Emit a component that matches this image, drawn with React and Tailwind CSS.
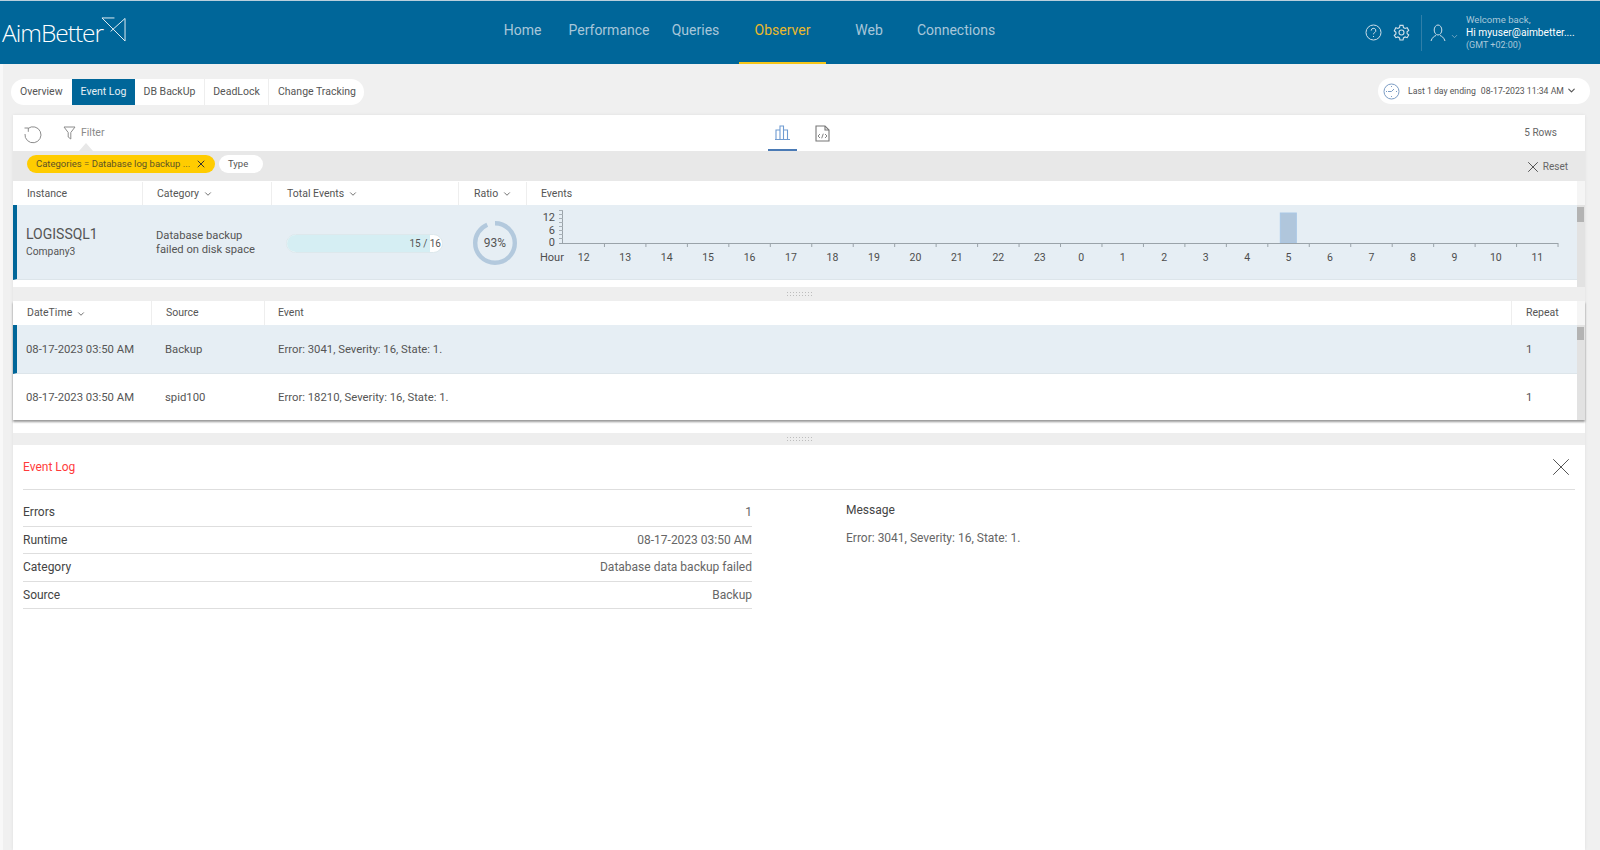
import React from 'react';
import { X, ChevronDown } from 'lucide-react';

const HOURS = [12,13,14,15,16,17,18,19,20,21,22,23,0,1,2,3,4,5,6,7,8,9,10,11];
const STEP = 41.46;
const AX = 36;
const AY = 38;

function Logo() {
  return (
    <div className="flex items-center text-white w-[130px] pt-[2px]">
      <span className="font-['Open_Sans',sans-serif] font-light text-[24.5px] tracking-[-1px] leading-none ml-[2px]">AimBetter</span>
      <svg width="25" height="25" viewBox="0 0 26 26" fill="none" stroke="#e8f0f5" strokeWidth="1" className="-mt-[8px] -ml-[2px]">
        <path d="M1 1H14M1 1L25 25V1.5L10 15" />
      </svg>
    </div>
  );
}

function HeaderCell({ className, label, sort, last }) {
  return (
    <div className={`flex items-center h-full gap-[4px] ${last ? '' : 'border-r border-[#eeeeee]'} ${className}`}>
      <span>{label}</span>
      {sort && <ChevronDown size={10} strokeWidth={2} className="text-[#555] mt-[1px]" />}
    </div>
  );
}

function Scroll({ trackClass, thumbClass }) {
  return (
    <div className="w-[8px] shrink-0 flex flex-col">
      <div className="h-[24px] bg-[#f5f5f5] shrink-0" />
      <div className={`bg-[#e2e2e2] ${trackClass}`}>
        <div className={`bg-[#b3b3b3] w-[7px] mt-[2px] ${thumbClass}`} />
      </div>
    </div>
  );
}

function Chart() {
  return (
    <svg width="1050" height="75" viewBox="0 0 1050 75" className="block">
      <rect x={AX + 17 * STEP + 12.5} y="8" width="16" height={AY - 8} fill="#b0c6dc" stroke="#a9c7e6" strokeWidth="1" />
      <path d={`M${AX - 0.5} 5V${AY}`} stroke="#9aa3a9" fill="none" />
      {[5, 9, 13, 17, 21, 25, 29, 33].map((y) => (
        <path key={y} d={`M${AX - 4} ${y + 0.5}H${AX}`} stroke="#a8b0b6" fill="none" />
      ))}
      <path d={`M${AX - 4} ${AY + 0.5}H${AX + 24 * STEP}`} stroke="#9aa3a9" fill="none" />
      {HOURS.map((h, i) => (
        <path key={`t${h}`} d={`M${AX + (i + 1) * STEP} ${AY}v4`} stroke="#9aa3a9" fill="none" />
      ))}
      <g fontFamily="Roboto" fontSize="11" fill="#4d4d4d" textAnchor="end">
        <text x="28" y="16">12</text>
        <text x="28" y="29">6</text>
        <text x="28" y="41">0</text>
      </g>
      <text x="13" y="56" fontFamily="Roboto" fontSize="11" fill="#4d4d4d">Hour</text>
      <g fontFamily="Roboto" fontSize="10.5" fill="#4d4d4d" textAnchor="middle">
        {HOURS.map((h, i) => (
          <text key={h} x={AX + (i + 0.5) * STEP} y="56">{h}</text>
        ))}
      </g>
    </svg>
  );
}

function Grip({ className }) {
  return (
    <div className={`shrink-0 bg-[#eeeeee] flex items-center justify-center ${className}`}>
      <div className="w-[26px] h-[6px] bg-[radial-gradient(#bdbdbd_1px,transparent_1px)] bg-[length:3px_3px]" />
    </div>
  );
}

export default function App() {
  return (
    <div className="w-[1600px] h-[850px] overflow-hidden bg-[#f0f0f0] font-['Roboto',sans-serif] text-[#555] text-[11.3px] flex flex-col">
      <header className="h-[64px] shrink-0 bg-[#006699] border-t border-[#b9cfdd] flex items-stretch relative">
        <Logo />
        <nav className="flex items-stretch h-full text-[14px] text-[#a8c6d9] ml-[374px] whitespace-nowrap">
          <span className="w-[37px] flex items-center justify-center pb-[4px]">Home</span>
          <span className="w-[80px] ml-[28px] flex items-center justify-center pb-[4px]">Performance</span>
          <span className="w-[47px] ml-[23px] flex items-center justify-center pb-[4px]">Queries</span>
          <span className="w-[87px] ml-[20px] flex items-center justify-center pb-[2px] text-[#eab92c] border-b-2 border-[#f5c518]">Observer</span>
          <span className="w-[28px] ml-[29px] flex items-center justify-center pb-[4px]">Web</span>
          <span className="w-[78px] ml-[34px] flex items-center justify-center pb-[4px]">Connections</span>
        </nav>
        <div className="absolute right-0 top-0 h-full flex items-center">
          <svg width="17" height="17" viewBox="0 0 17 17" fill="none" stroke="#cfdfe9" strokeWidth="1" className="mr-[11px]">
            <circle cx="8.5" cy="8.5" r="7.5" />
            <path d="M6.2 6.6a2.3 2.3 0 1 1 3.4 2c-.7.4-1.1.8-1.1 1.7" /><path d="M8.5 12v1" />
          </svg>
          <svg width="17" height="17" viewBox="0 0 24 24" fill="none" stroke="#cfdfe9" strokeWidth="1.6" className="mr-[11px]">
            <circle cx="12" cy="12" r="3.5" />
            <path d="M9.8 2h4.4l.6 3 2.3 1.3 2.9-1 2.2 3.8-2.3 2v2.4l2.3 2-2.2 3.8-2.9-1-2.3 1.3-.6 3H9.8l-.6-3-2.3-1.3-2.9 1L1.8 16l2.3-2v-2.4l-2.3-2L4 5.3l2.9 1 2.3-1.3z" />
          </svg>
          <div className="w-px h-[36px] bg-[#2f7fa9] mr-[8px]" />
          <svg width="16" height="18" viewBox="0 0 16 18" fill="none" stroke="#cfdfe9" strokeWidth="1" className="mr-[4px]">
            <ellipse cx="8" cy="6" rx="3.8" ry="5" /><path d="M1 17c1-3.5 3.5-5 5-5.5M15 17c-1-3.5-3.5-5-5-5.5" />
          </svg>
          <ChevronDown size={9} className="text-[#8fb5cc] mr-[7px] mt-[8px]" />
          <div className="w-[134px] leading-none whitespace-nowrap">
            <div className="text-[9.6px] text-[#a9c8da] leading-[12px]">Welcome back,</div>
            <div className="text-[10.2px] text-white leading-[13px]">Hi myuser@aimbetter....</div>
            <div className="text-[9px] text-[#a9c8da] leading-[12px]">(GMT +02:00)</div>
          </div>
        </div>
      </header>

      <div className="flex-1 flex flex-col border-l-[3px] border-[#f8f8f8] pl-[10px] pr-[15px] relative min-h-0">
        <div className="h-[51px] shrink-0 flex items-center justify-between -ml-[2px] -mr-[5px]">
          <div className="flex items-stretch h-[26px] bg-white rounded-full overflow-hidden text-[10.5px] mt-[5px] whitespace-nowrap">
            <span className="w-[61px] pl-[9px] flex items-center">Overview</span>
            <span className="w-[63px] justify-center flex items-center bg-[#006699] text-[#e8f0f5]">Event Log</span>
            <span className="w-[70px] justify-center flex items-center border-r border-[#eee]">DB BackUp</span>
            <span className="w-[64px] justify-center flex items-center border-r border-[#eee]">DeadLock</span>
            <span className="w-[95px] pl-[9px] flex items-center">Change Tracking</span>
          </div>
          <div className="flex items-center h-[26px] w-[212px] bg-white rounded-full text-[8.7px] pl-[5px] pt-[1px] mt-[3px] whitespace-nowrap">
            <svg width="17" height="17" viewBox="0 0 17 17" fill="none" stroke="#7b9cc4" strokeWidth="1" className="mr-[8px] shrink-0">
              <circle cx="8.5" cy="8.5" r="7.5" /><path d="M8.5 3v1M8.5 13v1M3 8.5h1M13 8.5h1M5 8.5h3.5L11 6" />
            </svg>
            <span>Last 1 day ending</span>
            <span className="ml-[5px]">08-17-2023 11:34 AM</span>
            <ChevronDown size={11} strokeWidth={2.5} className="ml-[2px] -mt-[3px] text-[#555] shrink-0" />
          </div>
        </div>

        <section className="flex-1 bg-white flex flex-col min-h-0 shadow-[0_0_3px_rgba(0,0,0,0.08)]">
          <div className="h-[36px] shrink-0 flex items-center relative text-[#8a8a8a]">
            <svg width="20" height="20" viewBox="0 0 20 20" fill="none" stroke="#8c8c8c" strokeWidth="1" className="ml-[10px] mt-[1px]">
              <path d="M5 4.5A8 8 0 1 1 2 10" /><path d="M1.5 4h3.8v3.8" />
            </svg>
            <svg width="13" height="14" viewBox="0 0 13 14" fill="none" stroke="#8c8c8c" strokeWidth="1" className="ml-[20px]">
              <path d="M1 1h11L7.8 6.5V13L5.2 11V6.5z" />
            </svg>
            <span className="ml-[5px] text-[10.5px]">Filter</span>
            <div className="absolute left-[755px] top-0 w-[29px] h-full border-b-2 border-[#4a7ab5] flex items-center justify-center pt-[1px]">
              <svg width="16" height="15" viewBox="0 0 16 15" fill="none" stroke="#6f9bd1" strokeWidth="1.1">
                <path d="M1 14V5h4v9M5 14V1h3.5v13M8.5 14V5h4v9M0 14.5h15" />
              </svg>
            </div>
            <div className="absolute left-[802px] top-[10px]">
              <svg width="15" height="17" viewBox="0 0 15 17" fill="none" stroke="#777" strokeWidth="1.1">
                <path d="M1 1h9l4 4v11H1z" /><path d="M10 1v4h4" /><path d="M5 9l-2 2 2 2M10 9l2 2-2 2M8.3 8.7l-1.6 4.6" strokeWidth=".9" />
              </svg>
            </div>
            <span className="absolute right-[28px] top-[11px] text-[10px] leading-[14px] text-[#666]">5 Rows</span>
          </div>

          <div className="h-[30px] shrink-0 bg-[#e8e8e8] flex items-center relative text-[9.5px]">
            <div className="absolute left-[66px] -top-[8px] w-0 h-0 border-l-[7px] border-r-[7px] border-b-[8px] border-l-transparent border-r-transparent border-b-[#e8e8e8]" />
            <div className="ml-[14px] mb-[4px] h-[18px] w-[188px] bg-[#ffcc00] rounded-full flex items-center pl-[9px] text-[#5c5326] whitespace-nowrap">
              <span>Categories = Database log backup ...</span>
              <X size={12} strokeWidth={2} className="ml-auto mr-[8px] text-[#333]" />
            </div>
            <div className="ml-[4px] mb-[4px] h-[18px] w-[44px] bg-white rounded-full flex items-center pl-[9px]">Type</div>
            <div className="ml-auto flex items-center mr-[17px]">
              <X size={18} strokeWidth={1.2} className="mt-[1px] text-[#444]" />
              <span className="text-[10px] text-[#666] ml-[1px]">Reset</span>
            </div>
          </div>

          <div className="flex shrink-0 h-[106px]">
            <div className="flex-1 min-w-0 flex flex-col">
              <div className="h-[24px] flex items-center shrink-0 text-[10.5px] pt-[1px]">
                <HeaderCell className="w-[130px] pl-[14px]" label="Instance" />
                <HeaderCell className="w-[129px] pl-[14px]" label="Category" sort />
                <HeaderCell className="w-[187px] pl-[15px]" label="Total Events" sort />
                <HeaderCell className="w-[68px] pl-[15px]" label="Ratio" sort />
                <HeaderCell className="flex-1 pl-[14px]" label="Events" last />
              </div>
              <div className="h-[75px] shrink-0 bg-[#e6eef4] border-l-4 border-[#006699] border-b border-b-[#dde5ea] flex items-center overflow-hidden">
                <div className="w-[125px] pl-[9px] -mt-[1px] shrink-0">
                  <div className="text-[14px] leading-[19px]">LOGISSQL1</div>
                  <div className="text-[10.3px] leading-[15px]">Company3</div>
                </div>
                <div className="w-[130px] pl-[14px] pt-[1px] shrink-0 text-[11.2px] leading-[13.5px]">Database backup<br />failed on disk space</div>
                <div className="w-[187px] pl-[14px] mt-[3px] shrink-0">
                  <div className="w-[157px] h-[19px] rounded-full overflow-hidden bg-white border border-[#dde8ec] flex items-center relative text-[10px]">
                    <div className="absolute left-0 top-0 bottom-0 w-[92%] bg-[#d5eef3]" />
                    <span className="relative ml-auto mr-[1px]">15 / 16</span>
                  </div>
                </div>
                <div className="w-[68px] shrink-0 pl-[14px] mt-[2px]">
                  <svg width="44" height="44" viewBox="0 0 44 44" className="block">
                    <circle cx="22" cy="22" r="19.8" fill="none" stroke="#b3c9dd" strokeWidth="4.4" strokeDasharray="115.7 124.4" transform="rotate(-90 22 22)" />
                    <text x="22" y="26" textAnchor="middle" fontSize="12" fill="#555" fontFamily="Roboto">93%</text>
                  </svg>
                </div>
                <div className="flex-1 min-w-0 h-full">
                  <Chart />
                </div>
              </div>
              <div className="h-[7px]" />
            </div>
            <Scroll trackClass="h-[82px]" thumbClass="h-[15px]" />
          </div>

          <Grip className="h-[14px]" />

          <div className="flex shrink-0 h-[119px] shadow-[0_2px_2px_rgba(0,0,0,0.4)]">
            <div className="flex-1 min-w-0 flex flex-col">
              <div className="h-[24px] flex items-center shrink-0 text-[10.5px]">
                <HeaderCell className="w-[139px] pl-[14px]" label="DateTime" sort />
                <HeaderCell className="w-[113px] pl-[14px]" label="Source" />
                <HeaderCell className="flex-1 pl-[13px]" label="Event" />
                <HeaderCell className="w-[65px] pl-[14px]" label="Repeat" last />
              </div>
              <div className="h-[49px] bg-[#e6eef4] border-l-4 border-[#006699] border-b border-b-[#dde5ea] flex items-center pt-[2px]">
                <div className="w-[135px] pl-[9px] shrink-0">08-17-2023 03:50 AM</div>
                <div className="w-[113px] pl-[13px] shrink-0">Backup</div>
                <div className="flex-1 pl-[13px]">Error: 3041, Severity: 16, State: 1.</div>
                <div className="w-[65px] pl-[14px] shrink-0">1</div>
              </div>
              <div className="h-[46px] flex items-center pl-[4px] pt-[3px]">
                <div className="w-[135px] pl-[9px] shrink-0">08-17-2023 03:50 AM</div>
                <div className="w-[113px] pl-[13px] shrink-0">spid100</div>
                <div className="flex-1 pl-[13px]">Error: 18210, Severity: 16, State: 1.</div>
                <div className="w-[65px] pl-[14px] shrink-0">1</div>
              </div>
            </div>
            <Scroll trackClass="h-[95px]" thumbClass="h-[13px]" />
          </div>

          <Grip className="h-[12px] mt-[13px]" />

          <div className="flex-1 flex flex-col px-[10px]">
            <div className="h-[45px] shrink-0 flex items-center justify-between border-b border-[#dedede]">
              <span className="text-[#ff3b3b] text-[12px]">Event Log</span>
              <X size={30} strokeWidth={0.8} className="text-[#555] -mr-[1px] -mt-[1px]" />
            </div>
            <div className="flex pt-[9px]">
              <div className="w-[729px] text-[12px]">
                {[['Errors','1'],['Runtime','08-17-2023 03:50 AM'],['Category','Database data backup failed'],['Source','Backup']].map(([k,v]) => (
                  <div key={k} className="h-[27.5px] flex items-center justify-between border-b border-[#dedede]">
                    <span className="text-[#444]">{k}</span><span className="text-[#666]">{v}</span>
                  </div>
                ))}
              </div>
              <div className="ml-[94px] pt-[2px] text-[12px]">
                <div className="text-[#444] leading-[18px]">Message</div>
                <div className="text-[#666] mt-[10px] leading-[18px]">Error: 3041, Severity: 16, State: 1.</div>
              </div>
            </div>
          </div>
        </section>
      </div>
    </div>
  );
}
